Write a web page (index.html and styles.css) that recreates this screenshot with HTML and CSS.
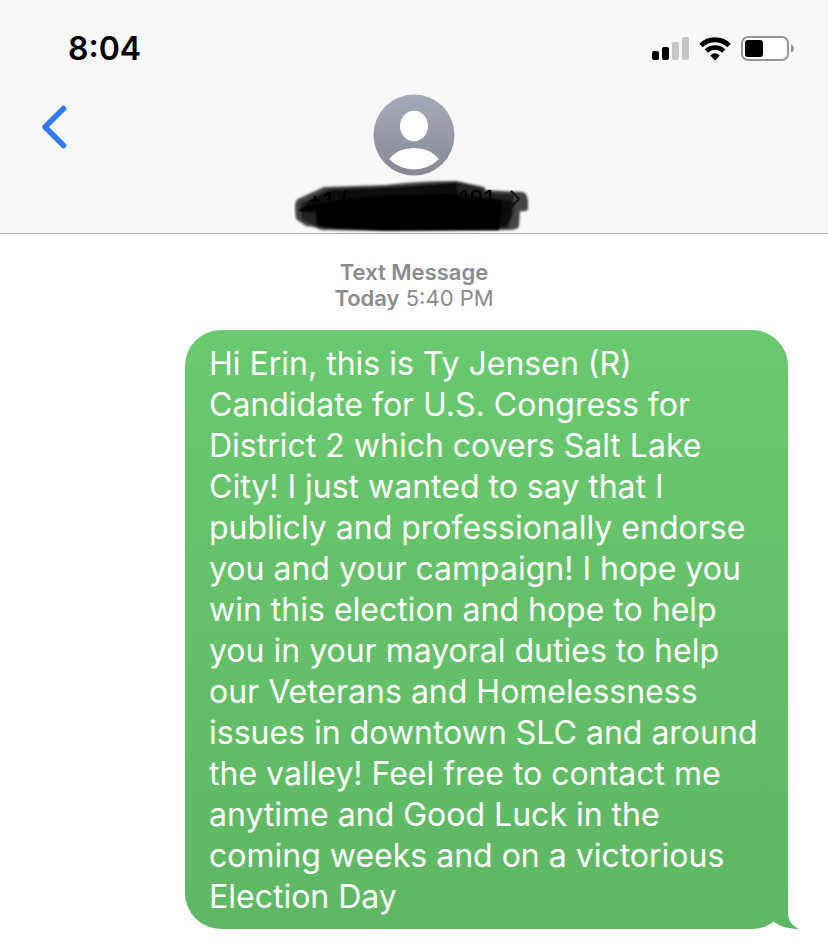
FILE: index.html
```html
<!DOCTYPE html>
<html lang="en">
<head>
    <meta charset="UTF-8">
    <meta name="viewport" content="width=device-width, initial-scale=1.0">
    <title>Messages</title>
    <link rel="stylesheet" href="styles.css">
</head>
<body>
    <header class="header">
        <div class="status">
            <span class="time">8:04</span>
            <div class="status-icons">
                <svg class="signal" width="37" height="24" viewBox="0 0 37 24">
                    <rect x="0" y="14" width="7" height="9" rx="2" fill="#000"/>
                    <rect x="10" y="10" width="7" height="13" rx="2" fill="#000"/>
                    <rect x="20" y="5" width="7" height="18" rx="2" fill="#c6c6c6"/>
                    <rect x="30" y="0" width="7" height="23" rx="2" fill="#c6c6c6"/>
                </svg>
                <svg class="wifi" width="32" height="24" viewBox="0 0 32 24">
                    <path d="M2 8.5 A20 20 0 0 1 30 8.5" fill="none" stroke="#000" stroke-width="5"/>
                    <path d="M7.3 14 A12.5 12.5 0 0 1 24.7 14" fill="none" stroke="#000" stroke-width="4.6"/>
                    <path d="M11.3 18.4 Q16 14.2 20.7 18.4 L16.7 22.9 Q16 23.5 15.3 22.9 Z" fill="#000"/>
                </svg>
                <svg class="battery" width="54" height="26" viewBox="0 0 54 26">
                    <rect x="1" y="1" width="46" height="23" rx="6" fill="#fff" stroke="#969696" stroke-width="2"/>
                    <rect x="4" y="4" width="18" height="17" rx="3" fill="#000"/>
                    <path d="M50 8.5 Q53 9.5 53 12.5 Q53 15.5 50 16.5 Z" fill="#969696"/>
                </svg>
            </div>
        </div>

        <div class="nav">
            <button class="back" type="button" aria-label="Back">
                <svg width="26" height="44" viewBox="0 0 26 44">
                    <path d="M22.5 3.5 L4 22 L22.5 40.5" fill="none" stroke="#2f7cf0" stroke-width="5.5" stroke-linecap="round" stroke-linejoin="round"/>
                </svg>
            </button>
            <div class="contact">
                <svg class="avatar" width="82" height="82" viewBox="0 0 82 82">
                    <defs>
                        <linearGradient id="avatarFill" x1="0" y1="0" x2="0" y2="1">
                            <stop offset="0" stop-color="#a6abb9"/>
                            <stop offset="1" stop-color="#868993"/>
                        </linearGradient>
                    </defs>
                    <circle cx="41" cy="41" r="40.5" fill="url(#avatarFill)"/>
                    <ellipse cx="41" cy="32" rx="14" ry="15.2" fill="#fff"/>
                    <path d="M16 65 Q25 54 41 54 Q57 54 66 65 Q55 75.5 41 75.5 Q27 75.5 16 65 Z" fill="#fff"/>
                </svg>
                <svg class="number" width="240" height="54" viewBox="0 0 240 54">
                    <defs>
                        <filter id="soft" x="-5%" y="-20%" width="110%" height="140%">
                            <feGaussianBlur stdDeviation="1"/>
                        </filter>
                    </defs>
                    <!-- marker strokes -->
                    <g filter="url(#soft)">
                        <path d="M1 26 Q2 20 6 19 L30 8 L92 6 Q125 2 162 2 L190 8 L192 11 L229 13 Q233 14 234 22 L234 30 Q233 33 226 32 L225 47 Q224 51 214 51 L90 52 L28 51 L20 48 L12 47 L2 40 Q1 34 1 26 Z" fill="#444"/>
                        <path d="M6 25 L34 10 L110 7 L164 3 L188 9 L192 14 L220 15 L220 32 L214 49 L100 51 L45 50 L24 49 L8 40 Z" fill="#222"/>
                        <path d="M18 20 L40 11 L110 8 L162 3 L164 14 L190 18 L218 22 L218 36 L212 49 L100 51 L45 50 L24 46 L22 34 L6 32 Z" fill="#0e0e0e"/>
                    </g>
                    <text class="digits" x="13" y="31">+1 (</text>
                    <text class="digits" x="165" y="29">181</text>
                    <path d="M217 12 L225 20 L217 28" fill="none" stroke="#151515" stroke-width="2"/>
                    <path d="M4 31 Q14 27 24 25 L40 22 L90 16 L160 14 L168 20 L208 21 L210 34 L206 38 L205 51 L90 51 L34 48 L24 46 L22 32 L5 32 Z" fill="#000" filter="url(#soft)"/>
                </svg>
            </div>
        </div>
    </header>

    <main class="thread">
        <p class="stamp"><b>Text Message</b><br><b>Today</b> 5:40 PM</p>
        <div class="bubble">
            Hi Erin, this is Ty Jensen (R) Candidate for U.S. Congress for District 2 which covers Salt Lake City! I just wanted to say that I publicly and professionally endorse you and your campaign! I hope you win this election and hope to help you in your mayoral duties to help our Veterans and Homelessness issues in downtown SLC and around the valley! Feel free to contact me anytime and Good Luck in the coming weeks and on a victorious Election Day
            <svg class="tail" width="40" height="40" viewBox="0 0 40 40">
                <path d="M28 0 V23 C28 31 31 36 39 40 C29 40 21 38 14 33 L0 10 Z" fill="#5fb864"/>
            </svg>
        </div>
    </main>
</body>
</html>
```
FILE: styles.css
```css
* {
    box-sizing: border-box;
}
body {
    margin: 0;
    background: #fff;
    font-family: Inter, "Liberation Sans", sans-serif;
}
.header {
    background: #f7f7f7;
    border-bottom: 1px solid #adadad;
}
.status {
    display: flex;
    justify-content: space-between;
    align-items: center;
    padding: 29px 33px 0 68px;
}
.time {
    font-size: 32px;
    line-height: 40px;
    font-weight: 600;
    color: #000;
}
.status-icons {
    display: flex;
    align-items: center;
    gap: 10px;
}
.nav {
    display: grid;
    grid-template-columns: 1fr 240px 1fr;
    padding: 25px 0 0;
}
.back {
    justify-self: start;
    align-self: start;
    margin: 11px 0 0 41px;
    padding: 0;
    border: none;
    background: none;
    cursor: pointer;
}
.back svg,
.contact svg,
.status-icons svg {
    display: block;
}
.contact {
    display: flex;
    flex-direction: column;
    align-items: center;
    gap: 3px;
}
.digits {
    font-size: 24px;
    fill: #000;
}
.thread {
    padding: 25px 40px 19px;
}
.stamp {
    margin: 0 0 19px;
    text-align: center;
    font-size: 22px;
    line-height: 26px;
    color: #8b8b8f;
}
.stamp b {
    font-weight: 600;
}
.bubble {
    position: relative;
    width: fit-content;
    max-width: 603px;
    margin-left: auto;
    padding: 13px 24px 12px;
    border-radius: 36px;
    background: linear-gradient(#69c96e, #5fb864);
    color: #fff;
    font-size: 32px;
    line-height: 41px;
}
.tail {
    position: absolute;
    right: -12px;
    bottom: 0;
}
```
